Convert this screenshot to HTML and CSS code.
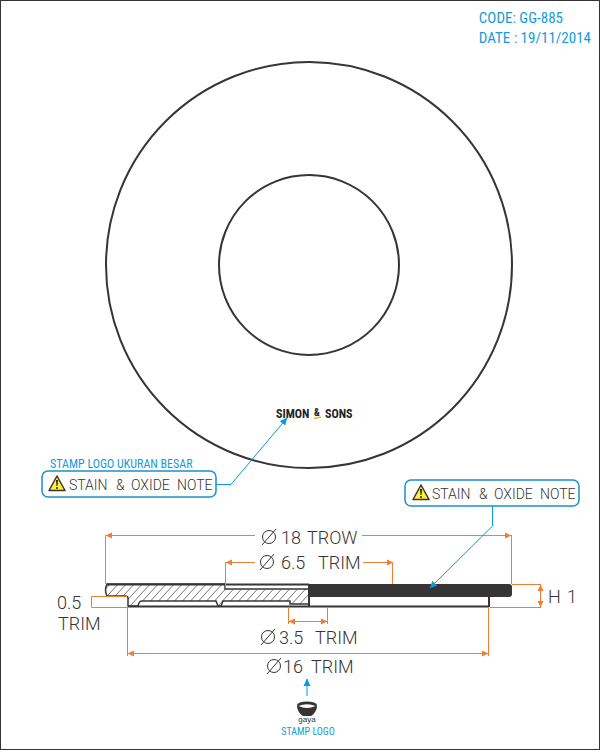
FILE: index.html
```html
<!DOCTYPE html>
<html lang="en">
<head>
<meta charset="utf-8">
<meta name="viewport" content="width=device-width, initial-scale=1">
<title>GG-885</title>
<link rel="stylesheet" href="styles.css">
</head>
<body>
<main class="sheet">
<header class="sheet-header">
<div class="sheet-info">
<p>CODE: GG-885</p>
<p>DATE : 19/11/2014</p>
</div>
</header>
<svg class="drawing" viewBox="1 49 598 700" role="img" aria-label="Plate drawing with dimensions">
<defs>
<clipPath id="section-clip">
<path d="M107 584H225V589H309V604H290V601H223L221 606H218L216 601H142Q139 601 138 606H128V598Q128 596 125 596H107Q104 590 107 584Z"/>
</clipPath>
<g id="warning">
<path d="M9 1 17 15.500H1Z" fill="#fff032" stroke="#373435" stroke-width="1.500" stroke-linejoin="round"/>
<path d="M8 5H10L9.500 11H8.500Z" fill="#222"/>
<circle cx="9" cy="13" r="1" fill="#222"/>
</g>
<g id="diameter" fill="none" stroke="#373435">
<circle cx="8" cy="8" r="6.500"/>
<path d="M1 16 15 0"/>
</g>
<marker id="orange-arrow" markerUnits="userSpaceOnUse" markerWidth="7" markerHeight="7" refX="6" refY="3.500" orient="auto-start-reverse"><path d="M0 .5 6.500 3.500 0 6.500Z" fill="#ee8036"/></marker>
<marker id="blue-arrow" markerUnits="userSpaceOnUse" markerWidth="8" markerHeight="8" refX="7" refY="4" orient="auto-start-reverse"><path d="M0 .5 7.500 4 0 7.500Z" fill="#079bd8"/></marker>
</defs>

<!-- Top view -->
<g class="outline">
<circle cx="309" cy="265" r="203"/>
<circle cx="309" cy="265" r="90"/>
</g>
<text class="brand" x="276" y="418">SIMON</text>
<text class="brand brand-and" x="314" y="416">&amp;</text>
<path d="M314 418.500 321 417" stroke="#d8b52b" stroke-width="1.500"/>
<text class="brand" x="325" y="418">SONS</text>

<!-- Notes -->
<text class="caption" x="50" y="468">STAMP LOGO UKURAN BESAR</text>
<rect class="note-box" x="42" y="471" width="174" height="26" rx="6"/>
<use href="#warning" x="48" y="475"/>
<text class="note" x="69" y="490">STAIN</text>
<text class="note" x="116" y="490">&amp;</text>
<text class="note" x="131" y="490">OXIDE</text>
<text class="note" x="177" y="490">NOTE</text>
<path class="leader" d="M216 484.500H231L287 418" marker-end="url(#blue-arrow)"/>
<rect class="note-box" x="405" y="480" width="174" height="26" rx="6"/>
<use href="#warning" x="412" y="484"/>
<text class="note" x="432" y="499">STAIN</text>
<text class="note" x="479" y="499">&amp;</text>
<text class="note" x="494" y="499">OXIDE</text>
<text class="note" x="540" y="499">NOTE</text>

<!-- Section -->
<path class="hatch" clip-path="url(#section-clip)" d="M90 606l22-24M98 606l22-24M106 606l22-24M114 606l22-24M122 606l22-24M130 606l22-24M138 606l22-24M146 606l22-24M154 606l22-24M162 606l22-24M170 606l22-24M178 606l22-24M186 606l22-24M194 606l22-24M202 606l22-24M210 606l22-24M218 606l22-24M226 606l22-24M234 606l22-24M242 606l22-24M250 606l22-24M258 606l22-24M266 606l22-24M274 606l22-24M282 606l22-24M290 606l22-24M298 606l22-24"/>
<path d="M107 584H225V589H309V604H290V601H223L221 606H218L216 601H142Q139 601 138 606H128V598Q128 596 125 596H107Q104 590 107 584Z" fill="none" stroke="#373435" stroke-width="1.500"/>
<path d="M107 584.500H309M128 606.500H489M489 597V607M309 584V607" class="outline"/>
<path d="M308 584H509Q512 584 512 587V594Q512 597 509 597H308Z" fill="#373435"/>

<!-- Dimensions -->
<g class="dimension">
<path d="M106 535.500H255" marker-start="url(#orange-arrow)"/>
<path d="M362 535.500H511" marker-end="url(#orange-arrow)"/>
<path d="M105.500 535V584M511.500 535V584"/>
<path d="M226 562.500H255" marker-start="url(#orange-arrow)"/>
<path d="M363 562.500H393" marker-end="url(#orange-arrow)"/>
<path d="M225.500 562V588M392.500 562V584"/>
<path d="M289 621.500H327" marker-start="url(#orange-arrow)" marker-end="url(#orange-arrow)"/>
<path d="M288.500 608V624M327.500 608V624"/>
<path d="M128 653.500H488" marker-start="url(#orange-arrow)" marker-end="url(#orange-arrow)"/>
<path d="M127.500 607V656M488.500 608V656"/>
<path d="M127 596.500H91.500V607.500H127"/>
<path d="M512 584.500H541M490 607.500H541"/>
<path d="M540.500 585V607" marker-start="url(#orange-arrow)" marker-end="url(#orange-arrow)"/>
</g>
<path class="leader" d="M492.500 506V526L430 588" marker-end="url(#blue-arrow)"/>
<use href="#diameter" x="261" y="529"/>
<text class="measure" x="281" y="544">18</text>
<text class="measure" x="307" y="544">TROW</text>
<use href="#diameter" x="259" y="554"/>
<text class="measure" x="281" y="569">6.5</text>
<text class="measure" x="318" y="569">TRIM</text>
<use href="#diameter" x="260" y="629"/>
<text class="measure" x="279" y="644">3.5</text>
<text class="measure" x="315" y="644">TRIM</text>
<use href="#diameter" x="266" y="658"/>
<text class="measure" x="283" y="673">16</text>
<text class="measure" x="311" y="673">TRIM</text>
<text class="measure" x="57" y="609">0.5</text>
<text class="measure" x="58" y="630">TRIM</text>
<text class="measure" x="548" y="603">H</text>
<text class="measure" x="567" y="603">1</text>

<!-- Maker stamp -->
<path class="leader" d="M307 696V679" marker-end="url(#blue-arrow)"/>
<path d="M297 706C297 711 301 715 303 716H311C313 715 317 711 317 706Z" fill="#373435"/>
<ellipse cx="307" cy="705" rx="10" ry="3.500" fill="#373435"/>
<path d="M298.500 706Q307 702.500 315.500 706Q307 710 298.500 706Z" fill="#fff"/>
<text class="maker" x="307" y="722">gaya</text>
<text class="caption caption-small" x="308" y="735">STAMP LOGO</text>
</svg>
</main>
</body>
</html>
```
FILE: styles.css
```css
* {
  box-sizing: border-box;
}

body {
  margin: 0;
  background: #fff;
}

.sheet {
  border: 1px solid #373435;
}

.sheet-header {
  display: flex;
  justify-content: flex-end;
  height: 48px;
  padding: 7px 8px 0 0;
}

.sheet-info {
  color: #169bd7;
  font: 15px/20px "Roboto Condensed", Roboto, sans-serif;
}

.sheet-info p {
  margin: 0;
}

.drawing {
  display: block;
  width: 100%;
}

.outline {
  fill: none;
  stroke: #373435;
  stroke-width: 2px;
}

.hatch {
  fill: none;
  stroke: #77777b;
  stroke-width: 1px;
}

.brand {
  fill: #222;
  font: bold 12px "Roboto Condensed", Roboto, sans-serif;
}

.brand-and {
  font-size: 10px;
}

.caption {
  fill: #169bd7;
  font: 12px "Roboto Condensed", Roboto, sans-serif;
}

.caption-small {
  font-size: 10px;
  text-anchor: middle;
}

.note-box {
  fill: none;
  stroke: #1a91d0;
  stroke-width: 1.5px;
}

.note {
  fill: #373435;
  font: 300 14px Roboto, sans-serif;
}

.leader {
  fill: none;
  stroke: #079bd8;
  stroke-width: 1px;
}

.dimension {
  fill: none;
  stroke: #ee8036;
  stroke-width: 1px;
}

.measure {
  fill: #373435;
  font: 300 18px Roboto, sans-serif;
}

.maker {
  fill: #373435;
  font: 8px "Liberation Sans", sans-serif;
  text-anchor: middle;
}
```
